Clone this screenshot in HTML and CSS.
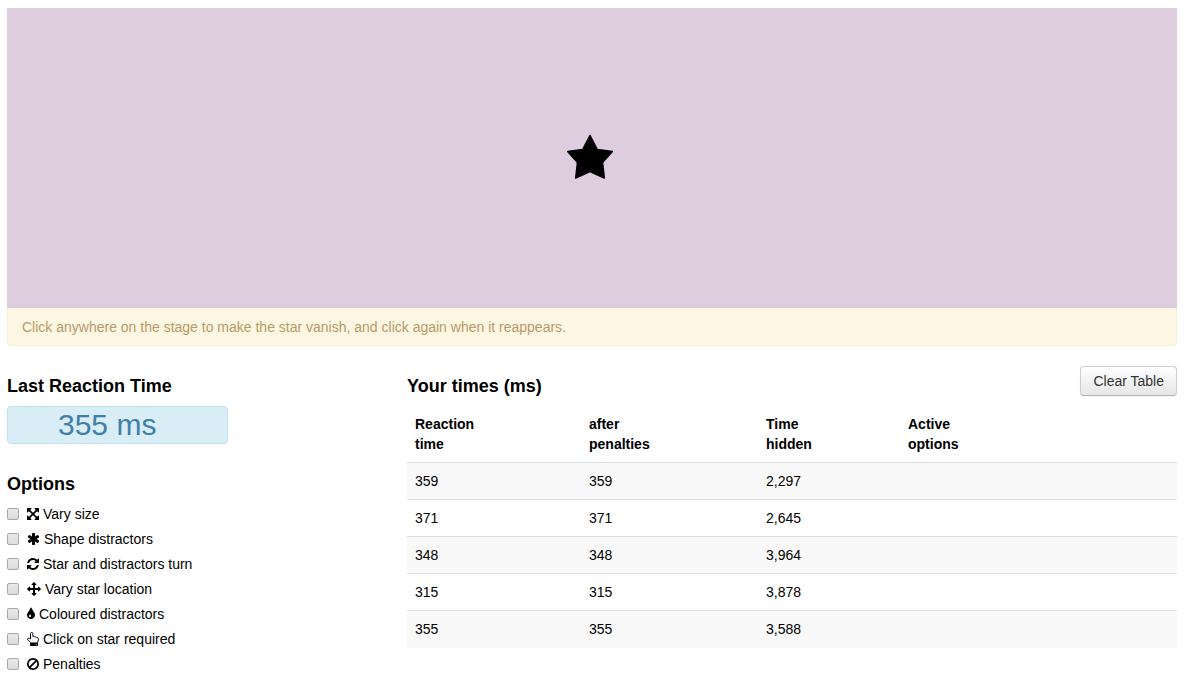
FILE: index.html
```html
<!DOCTYPE html>
<html lang="en">
<head>
<meta charset="utf-8">
<title>Reaction Time</title>
<link rel="stylesheet" href="styles.css">
</head>
<body>
<main class="page">
  <div class="stage">
    <svg class="star" viewBox="0 0 50 50" aria-label="Star"><path d="M25 2.500L32.300 16.500 47.300 18.500 37.500 29.500 39.300 45 25 38.500 10.700 45 12.500 29.500 2.700 18.500 17.700 16.500z" stroke="#000" stroke-width="1.600" stroke-linejoin="round"/></svg>
  </div>
  <p class="hint">Click anywhere on the stage to make the star vanish, and click again when it reappears.</p>
  <div class="columns">
    <div class="sidebar">
      <section>
        <h2 class="heading">Last Reaction Time</h2>
        <output class="result">355 ms</output>
      </section>
      <section class="options">
        <h2 class="heading">Options</h2>
        <label class="option"><input class="check" type="checkbox">
          <svg class="icon" viewBox="128 0 1536 1792"><path d="M1411 541l-355 355 355 355 144-144q29-31 70-14 39 17 39 59v448q0 26-19 45t-45 19h-448q-42 0-59-40-17-39 14-69l144-144-355-355-355 355 144 144q31 30 14 69-17 40-59 40h-448q-26 0-45-19t-19-45v-448q0-42 40-59 39-17 69 14l144 144 355-355-355-355-144 144q-19 19-45 19-12 0-24-5-40-17-40-59v-448q0-26 19-45t45-19h448q42 0 59 40 17 39-14 69l-144 144 355 355 355-355-144-144q-31-30-14-69 17-40 59-40h448q26 0 45 19t19 45v448q0 42-39 59-13 5-25 5-26 0-45-19z"/></svg>
          <span>Vary size</span></label>
        <label class="option"><input class="check" type="checkbox">
          <svg class="icon icon-asterisk" viewBox="64 0 1664 1792"><path d="M1546 1050q46 26 59.500 77.500t-12.500 97.500l-64 110q-26 46-77.500 59.500t-97.500-12.500l-266-153v307q0 52-38 90t-90 38h-128q-52 0-90-38t-38-90v-307l-266 153q-46 26-97.500 12.500t-77.500-59.500l-64-110q-26-46-12.500-97.500t59.500-77.500l266-154-266-154q-46-26-59.500-77.500t12.500-97.500l64-110q26-46 77.500-59.500t97.500 12.500l266 153v-307q0-52 38-90t90-38h128q52 0 90 38t38 90v307l266-153q46-26 97.500-12.500t77.500 59.500l64 110q26 46 12.500 97.500t-59.500 77.500l-266 154z"/></svg>
          <span>Shape distractors</span></label>
        <label class="option"><input class="check" type="checkbox">
          <svg class="icon" viewBox="128 0 1536 1792"><path d="M1639 1056q0 5-1 7-64 268-268 434.500t-478 166.500q-146 0-282.500-55t-243.500-157l-129 129q-19 19-45 19t-45-19-19-45v-448q0-26 19-45t45-19h448q26 0 45 19t19 45-19 45l-137 137q71 66 161 102t187 36q134 0 250-65t186-179q11-17 53-117 8-23 30-23h192q13 0 22.500 9.500t9.500 22.500zm25-800v448q0 26-19 45t-45 19h-448q-26 0-45-19t-19-45 19-45l138-138q-148-137-349-137-134 0-250 65t-186 179q-11 17-53 117-8 23-30 23h-199q-13 0-22.500-9.500t-9.500-22.500v-7q65-268 270-434.500t480-166.500q146 0 284 55.500t245 156.500l130-129q19-19 45-19t45 19 19 45z"/></svg>
          <span>Star and distractors turn</span></label>
        <label class="option"><input class="check" type="checkbox">
          <svg class="icon icon-move" viewBox="0 0 1792 1792"><path d="M1792 896q0 26-19 45l-256 256q-19 19-45 19t-45-19-19-45v-128h-384v384h128q26 0 45 19t19 45-19 45l-256 256q-19 19-45 19t-45-19l-256-256q-19-19-19-45t19-45 45-19h128v-384h-384v128q0 26-19 45t-45 19-45-19l-256-256q-19-19-19-45t19-45l256-256q19-19 45-19t45 19 19 45v128h384v-384h-128q-26 0-45-19t-19-45 19-45l256-256q19-19 45-19t45 19l256 256q19 19 19 45t-19 45-45 19h-128v384h384v-128q0-26 19-45t45-19 45 19l256 256q19 19 19 45z"/></svg>
          <span>Vary star location</span></label>
        <label class="option"><input class="check" type="checkbox">
          <svg class="icon icon-drop" viewBox="384 0 1024 1792"><path d="M896 1152q0-36-20-69-1-1-15.500-22.500t-25.500-38-25-44-21-50.500q-4-16-21-16t-21 16q-7 23-21 50.500t-25 44-25.500 38-15.500 22.500q-20 33-20 69 0 53 37.500 90.500t90.500 37.500 90.500-37.500 37.500-90.500zm512-128q0 212-150 362t-362 150-362-150-150-362q0-145 81-275 6-9 62.500-90.500t101-151 99.500-178 83-201.500q9-30 34-47t51-17 51.500 17 33.500 47q28 93 83 201.500t99.500 178 101 151 62.500 90.500q81 127 81 275z"/></svg>
          <span>Coloured distractors</span></label>
        <label class="option"><input class="check" type="checkbox">
          <svg class="icon" viewBox="0 0 12 14"><path d="M3.500 10.500C3 9 .5 8.500.5 7.200.5 6 2 5.800 3.500 7V1.700a1.200 1.200 0 0 1 2.400 0V4.600C6.700 4.200 7.500 4.400 7.900 5.100 8.700 4.700 9.500 5 9.800 5.700 10.900 5.500 11.500 6.200 11.500 7.200 11.500 8.600 10.700 9.300 10.600 10.500" fill="none" stroke="#000"/><path d="M3 10.500h8v2.800a.7.7 0 0 1-.7.700H3.700a.7.7 0 0 1-.7-.7z"/><circle cx="9.500" cy="12.300" r=".5" fill="#fff"/></svg>
          <span>Click on star required</span></label>
        <label class="option"><input class="check" type="checkbox">
          <svg class="icon" viewBox="128 0 1536 1792"><path d="M1440 893q0-161-87-295l-754 753q137 89 297 89 111 0 211.500-43.500t173.500-116.500 116-174.500 43-212.500zm-999 299l755-754q-135-91-300-91-148 0-273 73t-198 199-73 274q0 162 89 299zm1223-299q0 157-61 300t-163.500 246-245 164-298.500 61-298.500-61-245-164-163.500-246-61-300 61-299.500 163.500-245.500 245-164 298.500-61 298.500 61 245 164 163.500 245.500 61 299.500z"/></svg>
          <span>Penalties</span></label>
      </section>
    </div>
    <section class="times">
      <div class="times-head">
        <h2 class="heading">Your times (ms)</h2>
        <button class="btn" type="button">Clear Table</button>
      </div>
      <table class="table">
        <colgroup><col class="col-reaction"><col class="col-after"><col class="col-hidden"><col></colgroup>
        <thead>
          <tr><th>Reaction<br>time</th><th>after<br>penalties</th><th>Time<br>hidden</th><th>Active<br>options</th></tr>
        </thead>
        <tbody>
          <tr><td>359</td><td>359</td><td>2,297</td><td></td></tr>
          <tr><td>371</td><td>371</td><td>2,645</td><td></td></tr>
          <tr><td>348</td><td>348</td><td>3,964</td><td></td></tr>
          <tr><td>315</td><td>315</td><td>3,878</td><td></td></tr>
          <tr><td>355</td><td>355</td><td>3,588</td><td></td></tr>
        </tbody>
      </table>
    </section>
  </div>
</main>
</body>
</html>
```
FILE: styles.css
```css
* {
  box-sizing: border-box;
}

body {
  margin: 0;
  background: #fff;
  color: #000;
  font: 14px/20px "Liberation Sans", Arial, sans-serif;
}

.page {
  padding: 8px 15px 8px 7px;
}

.stage {
  display: flex;
  align-items: center;
  justify-content: center;
  height: 300px;
  padding-right: 4px;
  background: #deccdf;
}

.star {
  width: 50px;
  height: 50px;
}

.hint {
  margin: 0 0 20px;
  padding: 9px 14px 8px;
  border: 1px solid #fbeed5;
  border-top: 0;
  border-radius: 0 0 4px 4px;
  background: #fcf6e2;
  color: #b99a67;
}

.columns {
  display: grid;
  grid-template-columns: 370px 1fr;
  gap: 30px;
}

.heading {
  margin: 0;
  padding: 10px 0;
  font-size: 18px;
  line-height: 20px;
}

.result {
  display: block;
  width: 221px;
  height: 38px;
  padding: 0 50px;
  border: 1px solid #bce4ec;
  border-radius: 4px;
  background: #d9edf7;
  color: #4080a8;
  font-size: 30px;
  line-height: 36px;
}

.options {
  margin-top: 20px;
}

.option {
  display: flex;
  align-items: center;
  height: 20px;
  margin-bottom: 5px;
}

.check {
  appearance: none;
  width: 12px;
  height: 12px;
  margin: 0 8px 0 0;
  border: 1px solid #a8a8a8;
  border-radius: 2px;
  background: linear-gradient(#e9e9e9, #dcdcdc);
}

.check:checked {
  background: #4080a8;
}

.icon {
  width: 12px;
  height: 14px;
  margin-right: 4px;
}

.icon-asterisk {
  width: 13px;
}

.icon-move {
  width: 14px;
}

.icon-drop {
  width: 8px;
}

.times-head {
  display: flex;
  align-items: flex-start;
  justify-content: space-between;
}

.btn {
  padding: 4px 12px;
  border: 1px solid #ccc;
  border-bottom-color: #b3b3b3;
  border-radius: 4px;
  background: linear-gradient(#fff, #e6e6e6);
  box-shadow: 0 1px 2px rgba(0, 0, 0, 0.05);
  color: #333;
  font: inherit;
}

.table {
  width: 100%;
  border-collapse: collapse;
  table-layout: fixed;
}

.col-reaction {
  width: 174px;
}

.col-after {
  width: 177px;
}

.col-hidden {
  width: 142px;
}

.table th,
.table td {
  height: 37px;
  padding: 8px;
  text-align: left;
  vertical-align: top;
}

.table td {
  border-top: 1px solid #ddd;
}

.table tbody tr:nth-child(odd) {
  background: #f9f9f9;
}
```
